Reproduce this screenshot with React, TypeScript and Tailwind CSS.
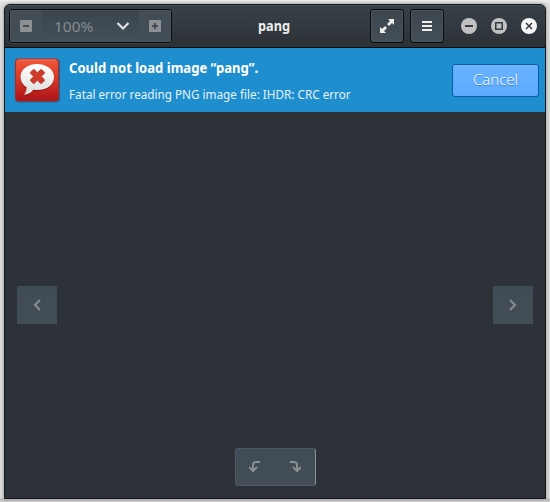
import type { ReactNode } from 'react';

const FONT = "font-['Noto_Sans',sans-serif]";
const BUTTON =
  'flex h-[34px] w-[34px] items-center justify-center rounded-[3px] border border-[#06080a] bg-linear-to-b from-[#3c464e] to-[#434e57] shadow-[inset_0_0_0_1px_#4a555d]';

function HeaderButton({ label, children }: { label: string; children: ReactNode }) {
  return <button aria-label={label} className={BUTTON}>{children}</button>;
}

function ZoomControls() {
  return (
    <div className="flex h-[34px] w-[163px] overflow-hidden rounded-[3px] border border-[#06080a] bg-linear-to-b from-[#3a444c] to-[#43505a] shadow-[0_1px_0_#3b444b]">
      <button aria-label="Zoom out" className="flex w-8 items-center justify-center border border-r-0 border-[#4a555e] bg-[#424d56] pr-[2px]">
        <svg width="12" height="12"><rect width="12" height="12" rx="1" fill="#8e9193" /><path d="M3 6h6" stroke="#424d56" strokeWidth="2" /></svg>
      </button>
      <button className="flex w-[97px] items-center border-y border-[#46515a] pl-[13px] text-[15px] text-[#848a8e]">
        <span className="-ml-px w-[49px] text-left leading-5"><span className="inline-block origin-left scale-x-[1.03]">100%</span></span>
        <svg className="ml-[13px]" width="14" height="10" fill="none"><path d="M1.5 2 7 7.5 12.5 2" stroke="#dce0e2" strokeWidth="2.2" /></svg>
      </button>
      <button aria-label="Zoom in" className="flex w-8 items-center justify-center border border-l-0 border-[#4a555e] bg-[#424d56]">
        <svg width="12" height="12"><rect width="12" height="12" rx="1" fill="#8e9193" /><path d="M3 6h6M6 3v6" stroke="#424d56" strokeWidth="2" /></svg>
      </button>
    </div>
  );
}

function WindowControls() {
  return (
    <div className="ml-[16px] flex gap-[14px]">
      <svg width="16" height="16"><circle cx="8" cy="8" r="8" fill="#c1c1c1" /><path d="M4 8h8" stroke="#333b42" strokeWidth="2" /></svg>
      <svg width="16" height="16"><circle cx="8" cy="8" r="8" fill="#c1c1c1" /><rect x="4.75" y="4.75" width="6.5" height="6.5" fill="none" stroke="#333b42" strokeWidth="1.5" /></svg>
      <svg width="16" height="16"><circle cx="8" cy="8" r="8" fill="#f6f6f6" /><path d="m5 5 6 6m0-6-6 6" stroke="#333b42" strokeWidth="1.5" /></svg>
    </div>
  );
}

function ErrorIcon() {
  return (
    <svg width="46" height="46" viewBox="0 0 46 46" className="shrink-0">
      <defs>
        <linearGradient id="red" x2="0" y2="1"><stop stopColor="#f0583b" /><stop offset=".5" stopColor="#d63525" /><stop offset="1" stopColor="#aa1217" /></linearGradient>
        <linearGradient id="bubble" x2="0" y2="1"><stop stopColor="#fff" /><stop offset="1" stopColor="#dcdcdc" /></linearGradient>
      </defs>
      <rect x="1" y="2" width="45" height="43.5" rx="4" fill="#125a83" opacity=".75" />
      <rect x="1.5" y="2" width="43" height="42" rx="3" fill="url(#red)" stroke="#b42620" />
      <path d="M4 3h38" stroke="#ff8062" opacity=".7" />
      <g transform="translate(.5 1)">
        <path d="M22.5 6C13 6 6 11.5 6 19c0 4.5 2.4 8 6.2 10.5-.2 3.5-1.2 5.2-2.8 7.2 4.2-.4 7.4-2 9.4-5 12 1.7 20.7-3.7 20.7-12.7C39.5 11.5 32 6 22.5 6Z" fill="#8e1714" transform="translate(0 1)" />
        <path d="M22.5 6C13 6 6 11.5 6 19c0 4.5 2.4 8 6.2 10.5-.2 3.5-1.2 5.2-2.8 7.2 4.2-.4 7.4-2 9.4-5 12 1.7 20.7-3.7 20.7-12.7C39.5 11.5 32 6 22.5 6Z" fill="url(#bubble)" />
        <path transform="translate(2.7 1.3) scale(.92)" d="m18.5 11 3.5 3.5 3.5-3.5h1l3.2 3.2v1L26.2 18.7l3.5 3.5v1l-3.2 3.2h-1L22 22.9l-3.5 3.5h-1l-3.2-3.2v-1l3.5-3.5-3.5-3.5v-1l3.2-3.2Z" fill="#cf3b2b" stroke="#b32c22" strokeWidth=".7" />
      </g>
    </svg>
  );
}

export default function App() {
  return (
    <main className={`h-[502px] w-[550px] bg-[linear-gradient(to_bottom,#eee_0,#ddd_4px,#ddd_498px,#b8b5b6_499px,#d2d0d0_502px)] p-1 ${FONT}`}>
      <section className="flex h-[495px] w-[542px] flex-col overflow-hidden rounded-t-[6px] border border-[#171a1d] bg-[#2d3138] shadow-[0_0_3px_1px_#aaa]">
        <header className="flex h-[43px] shrink-0 items-start border-b border-[#080c0f] bg-linear-to-b from-[#394249] to-[#2b3036] pt-1 pl-1 shadow-[inset_0_1px_0_#444d54]">
          <ZoomControls />
          <h1 className="ml-[86px] w-[112px] pt-[7px] text-[14px] leading-5 font-bold text-[#eeeeec]"><span className="inline-block origin-left scale-x-[0.91]">pang</span></h1>
          <div className="flex gap-[6px]">
            <HeaderButton label="Fullscreen">
              <svg width="14" height="14" fill="#eeeeec"><path d="M8 0h6v6l-2-2-3 3-2-2 3-3ZM0 8l2 2 3-3 2 2-3 3 2 2H0Z" /></svg>
            </HeaderButton>
            <HeaderButton label="Menu">
              <svg width="10" height="10" fill="#eeeeec"><path d="M0 0h10v2H0zM0 4h10v2H0zM0 8h10v2H0z" /></svg>
            </HeaderButton>
          </div>
          <div className="mt-[1px] ml-[6px] flex h-8 items-center border-l border-[#30373d]"><div className="-ml-[6px]"><WindowControls /></div></div>
        </header>

        <div role="alert" className="flex h-16 shrink-0 items-start bg-[#1e8ecf] pt-[9px] pl-[9px] text-white">
          <ErrorIcon />
          <div className="ml-[9px] w-[383px] whitespace-nowrap">
            <p className="origin-left scale-x-[0.932] text-[14px] leading-[22px] font-bold">Could not load image “pang”.</p>
            <p className="mt-[6px] origin-left scale-x-[0.976] text-[12px] leading-5 text-[#e5f2fa]">Fatal error reading PNG image file: IHDR: CRC error</p>
          </div>
          <button className="mt-[7px] h-[33px] w-[87px] shrink-0 rounded-[3px] border border-[#095bac] bg-linear-to-b from-[#69b2ff] to-[#5caaff] pb-[3px] text-[15px] leading-5 font-light text-white shadow-[inset_0_1px_0_#78bbff] [text-shadow:0_1px_0_#3480cc]">Cancel</button>
        </div>

        <div className="flex flex-1 flex-col bg-[#2d3138]">
          <div className="flex justify-between px-3 pt-[174px]">
            <button aria-label="Previous" className="flex h-[38px] w-10 items-center justify-center bg-[linear-gradient(to_bottom,#404c55,#434d56)]">
              <svg width="8" height="12" fill="none"><path d="M7 1 2 6l5 5" stroke="#898e91" strokeWidth="2" /></svg>
            </button>
            <button aria-label="Next" className="flex h-[38px] w-10 items-center justify-center bg-[linear-gradient(to_bottom,#404c55,#434d56)]">
              <svg width="8" height="12" fill="none"><path d="m1 1 5 5-5 5" stroke="#898e91" strokeWidth="2" /></svg>
            </button>
          </div>
          <div className="mt-[124px] ml-[230px] flex h-[38px] w-[81px] items-center justify-between rounded-[3px] border border-[#4d5961] border-r-[#8d9499] bg-linear-to-b from-[#404c55] to-[#434d56] pr-[14px] pl-[13px]">
            <button aria-label="Rotate counterclockwise"><svg width="12" height="12" fill="none" stroke="#898e91" strokeWidth="2"><path d="M11 1H7Q4 1 4 4v6M0 6l4 4 4-4" /></svg></button>
            <button aria-label="Rotate clockwise"><svg width="12" height="12" fill="none" stroke="#898e91" strokeWidth="2"><path d="M1 1h4q3 0 3 3v6M4 6l4 4 4-4" /></svg></button>
          </div>
        </div>
      </section>
    </main>
  );
}
